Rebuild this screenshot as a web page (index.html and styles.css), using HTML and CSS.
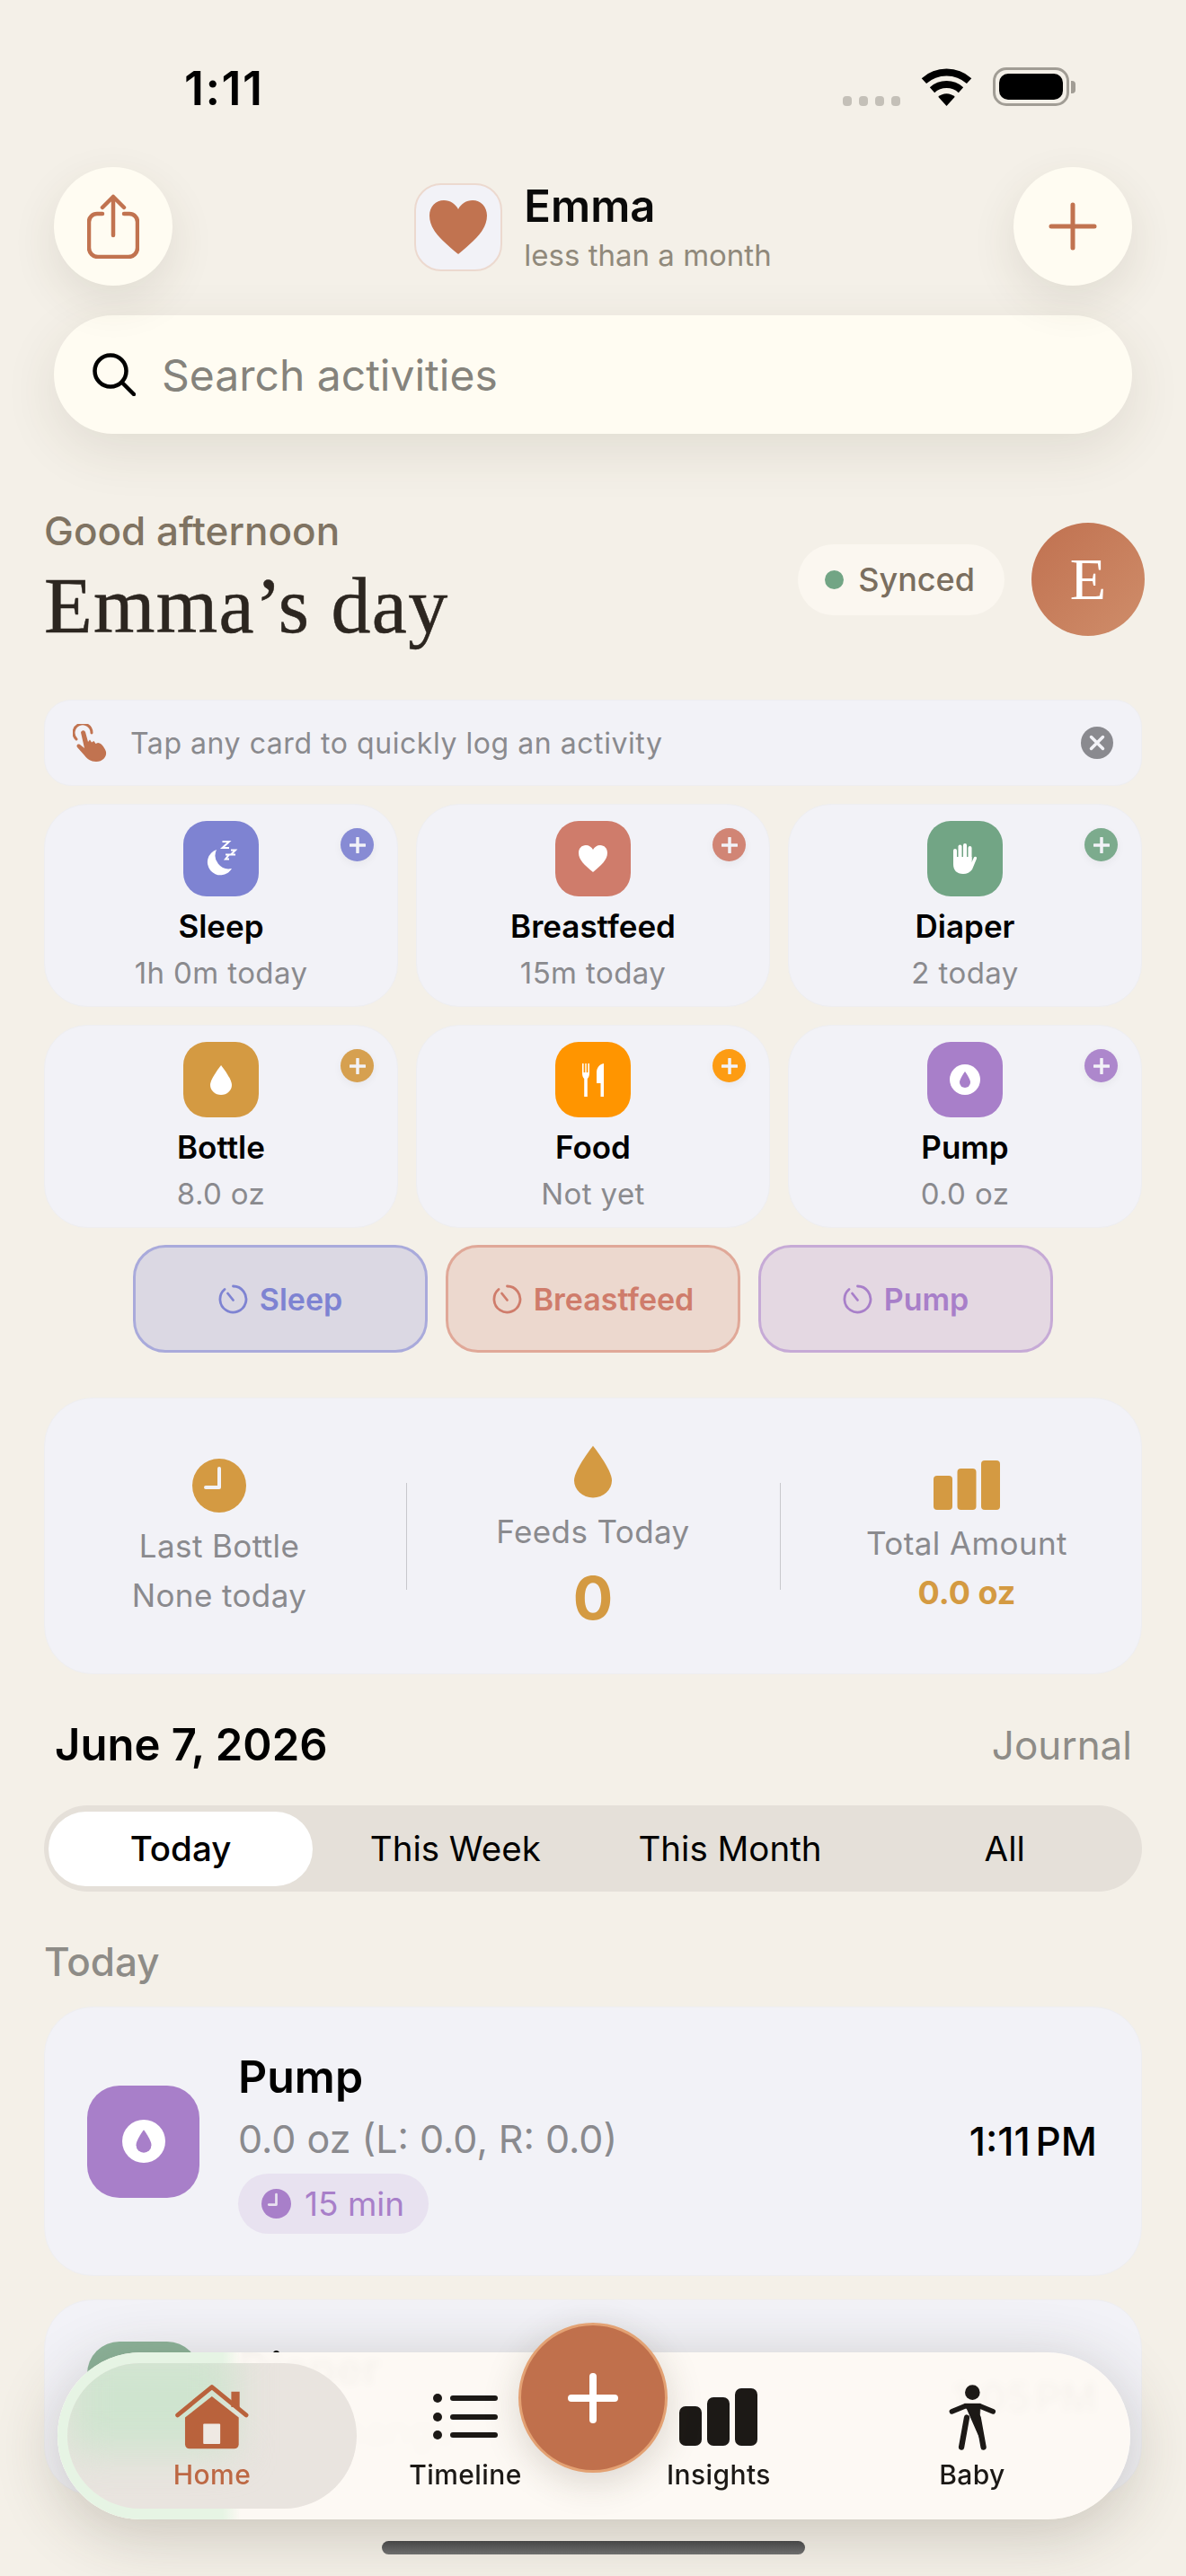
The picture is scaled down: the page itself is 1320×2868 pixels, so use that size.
FILE: index.html
```html
<!DOCTYPE html>
<html lang="en">
<head>
    <meta charset="UTF-8">
    <title>Emma's day</title>
    <link rel="stylesheet" href="styles.css">
</head>
<body>
<div class="screen">
    <div class="status-bar">
        <span class="status-time">1:11</span>
        <div class="status-icons">
            <div class="signal"><i></i><i></i><i></i><i></i></div>
            <svg class="wifi" viewBox="0 0 57 42">
                <path d="M3.4 14.1A37.5 37.5 0 0 1 53.6 14.1" fill="none" stroke="#000" stroke-width="8"/>
                <path d="M12.5 24.2A24 24 0 0 1 44.5 24.2" fill="none" stroke="#000" stroke-width="8"/>
                <path d="M28.5 42L19.2 31.7A14 14 0 0 1 37.8 31.7Z" fill="#000"/>
            </svg>
            <div class="battery"><div class="battery-fill"></div></div>
            <div class="battery-cap"></div>
        </div>
    </div>

    <div class="top-row">
        <div class="round-btn">
            <svg width="58" height="72" viewBox="0 0 58 72" fill="none" stroke="#c17350" stroke-width="4.5" stroke-linecap="round" stroke-linejoin="round">
                <path d="M17 22H11A9 9 0 0 0 2 31V60A10 10 0 0 0 12 70H46A10 10 0 0 0 56 60V31A9 9 0 0 0 47 22H41"/>
                <path d="M29 46V3M17 15L29 3L41 15"/>
            </svg>
        </div>
        <div class="baby-head">
            <div class="baby-photo">
                <svg width="64" height="60" viewBox="0 0 64 60"><path d="M32 60C14 45 0 33 0 17C0 7 7 0 16 0C23 0 29 4 32 10C35 4 41 0 48 0C57 0 64 7 64 17C64 33 50 45 32 60Z" fill="#c17350"/></svg>
            </div>
            <div>
                <div class="baby-name">Emma</div>
                <div class="baby-age">less than a month</div>
            </div>
        </div>
        <div class="round-btn">
            <svg width="54" height="54" viewBox="0 0 54 54" stroke="#c17350" stroke-width="5" stroke-linecap="round"><path d="M27 3V51M3 27H51"/></svg>
        </div>
    </div>

    <div class="search">
        <svg width="48" height="48" viewBox="0 0 48 48" fill="none" stroke="#000" stroke-width="4.5" stroke-linecap="round"><circle cx="20" cy="20" r="17.5"/><path d="M33 33L46 46"/></svg>
        <span>Search activities</span>
    </div>

    <div class="greeting">
        <div>
            <div class="greeting-small">Good afternoon</div>
            <h1 class="greeting-title">Emma’s day</h1>
        </div>
        <div class="greeting-right">
            <div class="synced"><i></i>Synced</div>
            <div class="avatar">E</div>
        </div>
    </div>

    <div class="hint">
        <svg width="38" height="42" viewBox="0 0 38 42">
            <path d="M4 17A10 10 0 1 1 21 10" fill="none" stroke="#c17350" stroke-width="3" stroke-linecap="round"/>
            <path d="M9 9.500A2.600 2.600 0 0 1 14 9L17 20L19 17.500L21 20.500L23.500 19L25.500 22L28 21C31 21 35 25 37 31C38 37 33 42 26 42C20 42 16 39 13 35L5 26C3.500 24 5.500 21.500 8 23L13 27Z" fill="#c17350"/>
        </svg>
        <span class="hint-text">Tap any card to quickly log an activity</span>
        <svg class="hint-close" width="36" height="36" viewBox="0 0 36 36"><circle cx="18" cy="18" r="18" fill="#8a8a8f"/><path d="M11.500 11.500L24.500 24.500M24.500 11.500L11.500 24.500" stroke="#f2f2f7" stroke-width="3.500" stroke-linecap="round"/></svg>
    </div>

    <div class="cards">
        <div class="card">
            <div class="card-icon sleep">
                <svg width="40" height="44" viewBox="0 0 40 44" fill="#fff">
                    <path d="M15 12A14.500 14.500 0 1 0 32 33A15 15 0 0 1 15 12Z"/>
                    <path d="M21.500 3H29L21.500 10H29M31 12.500H36L31 17.500H36M25 17.500H29L25 22.500H29" fill="none" stroke="#fff" stroke-width="2"/>
                </svg>
            </div>
            <div class="card-plus sleep"><svg width="18" height="18" viewBox="0 0 18 18"><path d="M9 1V17M1 9H17" stroke="#f2f2f7" stroke-width="3.500" stroke-linecap="round"/></svg></div>
            <div class="card-title">Sleep</div>
            <div class="card-sub">1h 0m today</div>
        </div>
        <div class="card">
            <div class="card-icon feed">
                <svg width="34" height="30" viewBox="0 0 64 60"><path d="M32 60C14 45 0 33 0 17C0 7 7 0 16 0C23 0 29 4 32 10C35 4 41 0 48 0C57 0 64 7 64 17C64 33 50 45 32 60Z" fill="#fff"/></svg>
            </div>
            <div class="card-plus feed"><svg width="18" height="18" viewBox="0 0 18 18"><path d="M9 1V17M1 9H17" stroke="#f2f2f7" stroke-width="3.500" stroke-linecap="round"/></svg></div>
            <div class="card-title">Breastfeed</div>
            <div class="card-sub">15m today</div>
        </div>
        <div class="card">
            <div class="card-icon diaper">
                <svg width="26" height="34" viewBox="0 0 26 34" fill="#fff">
                    <rect x="0" y="6" width="4" height="16" rx="2"/>
                    <rect x="5.500" y="1.500" width="4" height="18" rx="2"/>
                    <rect x="11" y="0" width="4" height="18" rx="2"/>
                    <rect x="16.500" y="3" width="4" height="18" rx="2"/>
                    <path d="M0 15H20.500V21L23 15.500C24 14 27 15 26 17L21 29C19 32 15 34 11 34C4 34 0 30 0 23Z"/>
                </svg>
            </div>
            <div class="card-plus diaper"><svg width="18" height="18" viewBox="0 0 18 18"><path d="M9 1V17M1 9H17" stroke="#f2f2f7" stroke-width="3.500" stroke-linecap="round"/></svg></div>
            <div class="card-title">Diaper</div>
            <div class="card-sub">2 today</div>
        </div>
        <div class="card">
            <div class="card-icon bottle">
                <svg width="24" height="33" viewBox="0 0 24 33"><path d="M12 0C12 0 24 15 24 22A12 11 0 0 1 0 22C0 15 12 0 12 0Z" fill="#fff"/></svg>
            </div>
            <div class="card-plus bottle"><svg width="18" height="18" viewBox="0 0 18 18"><path d="M9 1V17M1 9H17" stroke="#f2f2f7" stroke-width="3.500" stroke-linecap="round"/></svg></div>
            <div class="card-title">Bottle</div>
            <div class="card-sub">8.0 oz</div>
        </div>
        <div class="card">
            <div class="card-icon food">
                <svg width="24" height="37" viewBox="0 0 24 37" fill="#fff">
                    <path d="M0 0H1.600V10H3.300V0H4.700V10H6.400V0H8V11C8 14 7 16 5.800 17V37H2.200V17C1 16 0 14 0 11Z"/>
                    <path d="M24 0V37H20.500V22H16V10C16 5 19 1 24 0Z"/>
                </svg>
            </div>
            <div class="card-plus food"><svg width="18" height="18" viewBox="0 0 18 18"><path d="M9 1V17M1 9H17" stroke="#f2f2f7" stroke-width="3.500" stroke-linecap="round"/></svg></div>
            <div class="card-title">Food</div>
            <div class="card-sub">Not yet</div>
        </div>
        <div class="card">
            <div class="card-icon pump">
                <svg width="34" height="34" viewBox="0 0 34 34"><circle cx="17" cy="17" r="17" fill="#fff"/><path d="M17 8C17 8 23 16 23 20A6 6 0 0 1 11 20C11 16 17 8 17 8Z" fill="#a87fc9"/></svg>
            </div>
            <div class="card-plus pump"><svg width="18" height="18" viewBox="0 0 18 18"><path d="M9 1V17M1 9H17" stroke="#f2f2f7" stroke-width="3.500" stroke-linecap="round"/></svg></div>
            <div class="card-title">Pump</div>
            <div class="card-sub">0.0 oz</div>
        </div>
    </div>

    <div class="timers">
        <div class="timer timer-sleep">
            <svg width="33" height="33" viewBox="0 0 33 33" fill="none" stroke="currentColor" stroke-width="2.800" stroke-linecap="round"><path d="M16.500 2A14.500 14.500 0 1 1 7 5.500"/><path d="M16.500 17.500L10.500 10"/></svg>
            Sleep
        </div>
        <div class="timer timer-feed">
            <svg width="33" height="33" viewBox="0 0 33 33" fill="none" stroke="currentColor" stroke-width="2.800" stroke-linecap="round"><path d="M16.500 2A14.500 14.500 0 1 1 7 5.500"/><path d="M16.500 17.500L10.500 10"/></svg>
            Breastfeed
        </div>
        <div class="timer timer-pump">
            <svg width="33" height="33" viewBox="0 0 33 33" fill="none" stroke="currentColor" stroke-width="2.800" stroke-linecap="round"><path d="M16.500 2A14.500 14.500 0 1 1 7 5.500"/><path d="M16.500 17.500L10.500 10"/></svg>
            Pump
        </div>
    </div>

    <div class="stats">
        <div class="stat">
            <svg width="60" height="60" viewBox="0 0 60 60"><circle cx="30" cy="30" r="30" fill="#d49a42"/><path d="M30 11V32H15" fill="none" stroke="#f2f2f7" stroke-width="4" stroke-linecap="round" stroke-linejoin="round"/></svg>
            <div class="stat-label">Last Bottle</div>
            <div class="stat-label stat-none">None today</div>
        </div>
        <div class="stat-divider"></div>
        <div class="stat">
            <svg width="42" height="59" viewBox="0 0 24 33"><path d="M12 0C12 0 24 15 24 22A12 11 0 0 1 0 22C0 15 12 0 12 0Z" fill="#d49a42"/></svg>
            <div class="stat-label">Feeds Today</div>
            <div class="stat-big">0</div>
        </div>
        <div class="stat-divider"></div>
        <div class="stat">
            <svg width="74" height="55" viewBox="0 0 74 55" fill="#d49a42"><rect x="0" y="17" width="21" height="38" rx="4"/><rect x="26.500" y="9" width="21" height="46" rx="4"/><rect x="53" y="0" width="21" height="55" rx="4"/></svg>
            <div class="stat-label">Total Amount</div>
            <div class="stat-value">0.0 oz</div>
        </div>
    </div>

    <div class="date-row">
        <span class="date">June 7, 2026</span>
        <span class="journal">Journal</span>
    </div>

    <div class="segments">
        <div class="segment active">Today</div>
        <div class="segment">This Week</div>
        <div class="segment">This Month</div>
        <div class="segment">All</div>
    </div>

    <div class="section-title">Today</div>

    <div class="entry">
        <div class="entry-icon pump">
            <svg width="48" height="48" viewBox="0 0 34 34"><circle cx="17" cy="17" r="17" fill="#fff"/><path d="M17 8C17 8 23 16 23 20A6 6 0 0 1 11 20C11 16 17 8 17 8Z" fill="#a87fc9"/></svg>
        </div>
        <div>
            <div class="entry-title">Pump</div>
            <div class="entry-sub">0.0 oz (L: 0.0, R: 0.0)</div>
            <div class="entry-chip">
                <svg width="33" height="33" viewBox="0 0 60 60"><circle cx="30" cy="30" r="30" fill="#a87fc9"/><path d="M30 11V32H15" fill="none" stroke="#e8e2f0" stroke-width="5" stroke-linecap="round" stroke-linejoin="round"/></svg>
                15 min
            </div>
        </div>
        <div class="entry-time">1:11 PM</div>
    </div>

    <div class="entry entry-short">
        <div class="entry-icon entry-icon-faded"></div>
        <div>
            <div class="entry-title">Diaper</div>
            <div class="entry-sub">Wet change</div>
        </div>
        <div class="entry-time">1:05 PM</div>
    </div>

    <div class="tabbar">
        <div class="tab-rim"></div>
        <div class="tab-pill"></div>
        <div class="tab tab-active">
            <svg width="82" height="73" viewBox="465 195 245 220">
                <path d="M652 218H680V270H652Z" fill="#b9623c"/>
                <path d="M472 297L587 203L702 297" fill="none" stroke="#b9623c" stroke-width="15" stroke-linecap="round" stroke-linejoin="round"/>
                <path d="M497 305L587 234L677 305V395A15 15 0 0 1 662 410H512A15 15 0 0 1 497 395Z" fill="#b9623c"/>
                <rect x="558" y="326" width="57" height="68" rx="3" fill="#efe9e3"/>
            </svg>
            <span>Home</span>
        </div>
        <div class="tab">
            <svg width="72" height="73" viewBox="0 0 72 73" fill="#1c1916">
                <circle cx="5" cy="15" r="5"/><circle cx="5" cy="36" r="5"/><circle cx="5" cy="56" r="5"/>
                <rect x="19" y="12" width="53" height="6" rx="3"/><rect x="19" y="33" width="53" height="6" rx="3"/><rect x="19" y="53" width="53" height="6" rx="3"/>
            </svg>
            <span>Timeline</span>
        </div>
        <div class="tab">
            <svg width="88" height="73" viewBox="0 0 88 73" fill="#1c1916">
                <rect x="0" y="24" width="25" height="44" rx="7"/><rect x="31" y="14" width="25" height="54" rx="7"/><rect x="62" y="4" width="25" height="64" rx="7"/>
            </svg>
            <span>Insights</span>
        </div>
        <div class="tab">
            <svg width="55" height="73" viewBox="1005 190 165 220" fill="#1c1916">
                <circle cx="1087" cy="216" r="25"/>
                <path d="M1018 280L1062 262H1112L1156 280" fill="none" stroke="#1c1916" stroke-width="17" stroke-linecap="round" stroke-linejoin="round"/>
                <path d="M1060 254H1114L1109 330L1124 400" fill="#1c1916" stroke="#1c1916" stroke-width="2"/>
                <path d="M1068 300L1050 400M1106 300L1124 400" fill="none" stroke="#1c1916" stroke-width="19" stroke-linecap="round"/>
            </svg>
            <span>Baby</span>
        </div>
    </div>

    <div class="fab">
        <svg width="56" height="56" viewBox="0 0 56 56"><path d="M28 4V52M4 28H52" stroke="#fff" stroke-width="8" stroke-linecap="round"/></svg>
    </div>

    <div class="home-bar"></div>
</div>
</body>
</html>
```

FILE: styles.css
```css
* {
    box-sizing: border-box;
}
body {
    margin: 0;
    font-family: Inter, "Noto Sans", sans-serif;
    background: #f4f0e8;
}
svg {
    display: block;
    flex-shrink: 0;
}
.screen {
    position: relative;
    width: 1320px;
    height: 2868px;
    overflow: hidden;
    background: #f4f0e8;
}

/* status bar */
.status-bar {
    display: flex;
    justify-content: space-between;
    align-items: flex-start;
    height: 186px;
    padding: 75px 123px 0 205px;
}
.status-time {
    font-size: 52px;
    font-weight: 600;
    line-height: 48px;
    letter-spacing: 1.5px;
    color: #000;
}
.status-icons {
    display: flex;
    align-items: flex-end;
}
.signal {
    display: flex;
    gap: 8px;
    margin-right: 23px;
}
.signal i {
    width: 10px;
    height: 11px;
    border-radius: 4px;
    background: #c4c0b8;
}
.wifi {
    width: 57px;
    height: 42px;
    margin-right: 23px;
}
.battery {
    width: 85px;
    height: 43px;
    padding: 4px 4px;
    border: 3px solid #a19d95;
    border-radius: 15px;
}
.battery-fill {
    width: 100%;
    height: 100%;
    background: #000;
    border-radius: 10px;
}
.battery-cap {
    width: 5px;
    height: 14px;
    margin: 0 0 14px 2px;
    border-radius: 0 4px 4px 0;
    background: #a19d95;
}

/* header */
.top-row {
    display: flex;
    justify-content: space-between;
    align-items: center;
    padding: 0 60px;
}
.round-btn {
    display: flex;
    justify-content: center;
    align-items: center;
    width: 132px;
    height: 132px;
    border-radius: 50%;
    background: #fffcf2;
    box-shadow: 0 18px 50px rgba(70, 60, 40, 0.11);
}
.baby-head {
    display: flex;
    align-items: center;
    gap: 24px;
    margin-top: 2px;
}
.baby-photo {
    display: flex;
    justify-content: center;
    align-items: center;
    width: 98px;
    height: 98px;
    border: 2px solid #ecd9cf;
    border-radius: 30px;
    background: #f2f2f7;
}
.baby-name {
    font-size: 49px;
    font-weight: 600;
    line-height: 56px;
    color: #0a0a0a;
}
.baby-age {
    margin-top: 6px;
    font-size: 33px;
    line-height: 40px;
    color: #90897b;
}
.search {
    display: flex;
    align-items: center;
    gap: 29px;
    height: 132px;
    margin: 33px 60px 0;
    padding-left: 43px;
    border-radius: 66px;
    background: #fffcf2;
    box-shadow: 0 18px 60px rgba(70, 60, 40, 0.11);
    font-size: 48px;
    color: #85837c;
}

/* greeting */
.greeting {
    display: flex;
    justify-content: space-between;
    align-items: flex-start;
    margin-top: 83px;
    padding: 0 46px 0 49px;
}
.greeting-small {
    font-size: 44px;
    font-weight: 500;
    line-height: 50px;
    color: #7f7362;
}
.greeting-title {
    margin: 11px 0 0;
    font-family: "Liberation Serif", serif;
    font-size: 88px;
    font-weight: 400;
    line-height: 96px;
    letter-spacing: 1.3px;
    -webkit-text-stroke: 0.5px #2c2620;
    color: #2c2620;
}
.greeting-right {
    display: flex;
    align-items: center;
    gap: 30px;
    margin-top: 16px;
}
.synced {
    display: flex;
    align-items: center;
    gap: 16px;
    height: 79px;
    padding: 0 33px 0 30px;
    border-radius: 40px;
    background: #fbf7f0;
    font-size: 36px;
    font-weight: 500;
    color: #7a6e5f;
}
.synced i {
    width: 21px;
    height: 21px;
    border-radius: 50%;
    background: #72a585;
}
.avatar {
    display: flex;
    justify-content: center;
    align-items: center;
    width: 126px;
    height: 126px;
    border-radius: 50%;
    background: linear-gradient(135deg, #c07150, #cf8d6a);
    font-family: "Liberation Serif", serif;
    font-size: 66px;
    color: #fff;
}

/* hint */
.hint {
    display: flex;
    align-items: center;
    height: 96px;
    margin: 56px 49px 0;
    padding: 0 31px 0 31px;
    border: 1px solid #eeeef1;
    border-radius: 30px;
    background: #f2f2f7;
}
.hint-text {
    flex: 1;
    margin-left: 26px;
    font-size: 32px;
    letter-spacing: 0.55px;
    color: #8a8a8e;
}

/* quick log cards */
.cards {
    display: grid;
    grid-template-columns: repeat(3, 1fr);
    gap: 20px;
    margin: 20px 49px 0;
}
.card {
    position: relative;
    display: flex;
    flex-direction: column;
    align-items: center;
    height: 226px;
    padding-top: 18px;
    border: 1px solid #eeeef1;
    border-radius: 48px;
    background: #f2f2f7;
}
.card-icon {
    display: flex;
    justify-content: center;
    align-items: center;
    width: 84px;
    height: 84px;
    border-radius: 26px;
}
.card-plus {
    position: absolute;
    top: 26px;
    right: 26px;
    display: flex;
    justify-content: center;
    align-items: center;
    width: 37px;
    height: 37px;
    border-radius: 50%;
    opacity: 0.92;
    box-shadow: 0 3px 10px rgba(0, 0, 0, 0.05);
}
.sleep { background: #7e83d2; }
.feed { background: #cf7c6b; }
.diaper { background: #72a585; }
.bottle { background: #d49a42; }
.food { background: #ff9500; }
.pump { background: #a87fc9; }
.card-title {
    margin-top: 13px;
    font-size: 35px;
    font-weight: 600;
    line-height: 40px;
    color: #000;
}
.card-sub {
    margin-top: 12px;
    font-size: 33px;
    line-height: 40px;
    letter-spacing: 0.4px;
    color: #8a8a8e;
}

/* running timers */
.timers {
    display: flex;
    justify-content: center;
    gap: 20px;
    margin-top: 19px;
}
.timer {
    display: flex;
    justify-content: center;
    align-items: center;
    gap: 13px;
    width: 328px;
    height: 120px;
    border: 3px solid;
    border-radius: 36px;
    font-size: 34px;
    font-weight: 600;
}
.timer-sleep {
    border-color: #a9aadb;
    background: #dbd8e3;
    color: #7e83d2;
}
.timer-feed {
    border-color: #e0a898;
    background: #ecd8ce;
    color: #cf7c6b;
}
.timer-pump {
    border-color: #c6aad6;
    background: #e4d8e2;
    color: #a87fc9;
}

/* bottle stats */
.stats {
    display: flex;
    justify-content: center;
    align-items: center;
    height: 308px;
    margin: 50px 49px 0;
    border: 1px solid #eeeef1;
    border-radius: 54px;
    background: #f2f2f7;
}
.stat {
    display: flex;
    flex-direction: column;
    align-items: center;
    flex: 0 0 415px;
}
.stat-divider {
    flex: 0 0 1px;
    height: 119px;
    background: #c8c8cc;
}
.stat-label {
    margin-top: 16px;
    font-size: 35px;
    line-height: 42px;
    letter-spacing: 0.4px;
    color: #8a8a8e;
}
.stat-none {
    margin-top: 13px;
}
.stat-big {
    margin-top: 20px;
    font-size: 66px;
    font-weight: 700;
    line-height: 66px;
    color: #d49a42;
}
.stat-value {
    margin-top: 13px;
    font-size: 36px;
    font-weight: 700;
    line-height: 42px;
    color: #d49a42;
}

/* journal */
.date-row {
    display: flex;
    justify-content: space-between;
    align-items: center;
    margin-top: 49px;
    padding: 0 60px 0 61px;
    line-height: 60px;
}
.date {
    font-size: 49px;
    font-weight: 600;
    color: #000;
}
.journal {
    font-size: 44px;
    color: #8e8c87;
}
.segments {
    display: flex;
    align-items: center;
    height: 96px;
    margin: 37px 49px 0;
    padding-left: 5px;
    border-radius: 48px;
    background: #e5e0d9;
}
.segment {
    flex: 1;
    text-align: center;
    font-size: 38.5px;
    color: #000;
}
.segment.active {
    flex: 0 0 294px;
    height: 83px;
    margin-right: 6px;
    line-height: 83px;
    font-weight: 500;
    border-radius: 42px;
    background: #fff;
}
.section-title {
    margin: 53px 49px 0;
    font-size: 44px;
    font-weight: 500;
    line-height: 50px;
    color: #8e8c87;
}
.entry {
    display: flex;
    align-items: center;
    gap: 43px;
    height: 300px;
    margin: 25px 49px 0;
    padding: 0 49px 0 47px;
    border: 1px solid #eeeef1;
    border-radius: 54px;
    background: #f2f2f7;
}
.entry-short {
    height: 218px;
    margin-top: 26px;
}
.entry-icon {
    display: flex;
    justify-content: center;
    align-items: center;
    width: 125px;
    height: 125px;
    border-radius: 36px;
}
.entry-icon-faded {
    background: #8db39a;
}
.entry-title {
    font-size: 50px;
    font-weight: 600;
    line-height: 60px;
    color: #000;
}
.entry-sub {
    margin-top: 13px;
    font-size: 43px;
    line-height: 52px;
    color: #8a8a8e;
}
.entry-chip {
    display: inline-flex;
    align-items: center;
    gap: 15px;
    height: 67px;
    margin-top: 13px;
    padding: 0 27px 0 26px;
    border-radius: 34px;
    background: #e8e2f0;
    font-size: 37px;
    color: #a87fc9;
}
.entry-time {
    margin-left: auto;
    font-size: 44px;
    font-weight: 500;
    word-spacing: -6px;
    color: #000;
}

/* bottom tab bar, floats over the list */
.tabbar {
    position: absolute;
    left: 64px;
    top: 2619px;
    display: flex;
    width: 1194px;
    height: 186px;
    padding: 36px 31px 0;
    border-radius: 93px;
    background: rgba(253, 249, 244, 0.975);
    backdrop-filter: blur(4px);
    box-shadow: 0 14px 70px rgba(60, 50, 35, 0.24);
    overflow: hidden;
}
.tab-rim {
    position: absolute;
    left: 0;
    top: 0;
    bottom: 0;
    width: 204px;
    background: linear-gradient(90deg, #e6f4e4 90%, rgba(230, 244, 228, 0) 100%);
}
.tab-pill {
    position: absolute;
    left: 11px;
    top: 12px;
    width: 322px;
    height: 162px;
    border-radius: 81px;
    overflow: hidden;
    background: #e9e4df;
}
.tab-pill::before {
    content: "";
    position: absolute;
    left: 0;
    top: -20px;
    width: 185px;
    height: 120px;
    background: #cfe4cf;
    filter: blur(22px);
}
.tab {
    position: relative;
    display: flex;
    flex-direction: column;
    align-items: center;
    flex: 0 0 282px;
    font-size: 30px;
    font-weight: 500;
    color: #1c1916;
}
.tab span {
    margin-top: 9px;
    line-height: 36px;
    letter-spacing: 0.4px;
}
.tab-active {
    color: #bd6844;
}
.fab {
    position: absolute;
    left: 577px;
    top: 2586px;
    display: flex;
    justify-content: center;
    align-items: center;
    width: 166px;
    height: 167px;
    border: 3px solid #e3a173;
    border-radius: 50%;
    background: #c0704c;
    box-shadow: 0 10px 40px rgba(60, 50, 35, 0.18);
}
.home-bar {
    position: absolute;
    left: 425px;
    top: 2829px;
    width: 471px;
    height: 15px;
    border-radius: 8px;
    background: linear-gradient(#464646, #6e6e6e);
}
```
